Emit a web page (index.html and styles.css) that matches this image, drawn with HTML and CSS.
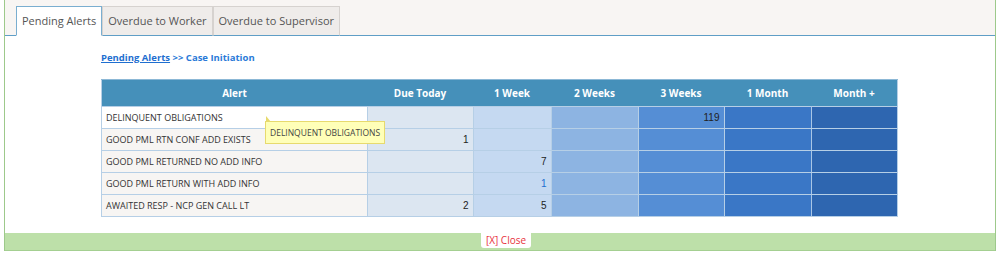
FILE: index.html
```html
<!DOCTYPE html>
<html lang="en">
<head>
    <meta charset="UTF-8">
    <title>Pending Alerts</title>
    <link rel="stylesheet" href="styles.css">
</head>
<body>
    <div class="panel">
        <div class="tabbar">
            <div class="tab active">Pending Alerts</div>
            <div class="tab">Overdue to Worker</div>
            <div class="tab">Overdue to Supervisor</div>
        </div>

        <div class="content">
            <div class="crumb"><a href="#">Pending Alerts</a> &gt;&gt; Case Initiation</div>

            <div class="table-wrap">
                <table class="alerts">
                    <thead>
                        <tr>
                            <th class="c-alert">Alert</th>
                            <th class="c-today">Due Today</th>
                            <th class="c-w1">1 Week</th>
                            <th class="c-w2">2 Weeks</th>
                            <th class="c-w3">3 Weeks</th>
                            <th class="c-m1">1 Month</th>
                            <th class="c-mplus">Month +</th>
                        </tr>
                    </thead>
                    <tbody>
                        <tr class="hover">
                            <td class="name">DELINQUENT OBLIGATIONS</td>
                            <td class="today"></td><td class="w1"></td><td class="w2"></td><td class="w3">119</td><td class="m1"></td><td class="mplus"></td>
                        </tr>
                        <tr>
                            <td class="name">GOOD PML RTN CONF ADD EXISTS</td>
                            <td class="today">1</td><td class="w1"></td><td class="w2"></td><td class="w3"></td><td class="m1"></td><td class="mplus"></td>
                        </tr>
                        <tr>
                            <td class="name">GOOD PML RETURNED NO ADD INFO</td>
                            <td class="today"></td><td class="w1">7</td><td class="w2"></td><td class="w3"></td><td class="m1"></td><td class="mplus"></td>
                        </tr>
                        <tr>
                            <td class="name">GOOD PML RETURN WITH ADD INFO</td>
                            <td class="today"></td><td class="w1 link">1</td><td class="w2"></td><td class="w3"></td><td class="m1"></td><td class="mplus"></td>
                        </tr>
                        <tr>
                            <td class="name">AWAITED RESP - NCP GEN CALL LT</td>
                            <td class="today">2</td><td class="w1">5</td><td class="w2"></td><td class="w3"></td><td class="m1"></td><td class="mplus"></td>
                        </tr>
                    </tbody>
                </table>
                <div class="tooltip">DELINQUENT OBLIGATIONS</div>
            </div>
        </div>

        <div class="footer">
            <span class="close">[X] Close</span>
        </div>
    </div>
</body>
</html>
```

FILE: styles.css
```css
body {
    margin: 0;
    font-family: 'Open Sans', sans-serif;
    background-color: #ffffff;
}
.panel {
    margin: 0 4px;
    border-left: 1px solid #9dc98b;
    border-right: 1px solid #9dc98b;
    background-color: #ffffff;
}
.tabbar {
    display: flex;
    align-items: flex-end;
    height: 35px;
    padding-left: 11px;
    background-color: #f8f5f3;
    border-bottom: 1px solid #5f9ec6;
}
.tab {
    height: 28px;
    line-height: 28px;
    padding: 0 5px;
    margin-bottom: -1px;
    font-size: 11px;
    color: #555;
    background-color: #efecea;
    border: 1px solid #d6d2cf;
    border-bottom-color: #5f9ec6;
}
.tab.active {
    background-color: #ffffff;
    border-color: #7aaed0;
    border-bottom-color: #ffffff;
}
.content {
    padding: 14px 0 0 96px;
    height: 183px;
}
.crumb {
    font-size: 9.5px;
    font-weight: bold;
    color: #2a7ad8;
    height: 15px;
    line-height: 15px;
}
.crumb a {
    color: #1f6fd0;
    text-decoration: underline;
}
.table-wrap {
    position: relative;
    margin-top: 14px;
    width: 797px;
}
.alerts {
    border-collapse: collapse;
    width: 797px;
    table-layout: fixed;
    border: 1px solid #b6cfe6;
}
.alerts th {
    height: 26px;
    padding: 0;
    background-color: #4590ba;
    color: #ffffff;
    font-weight: bold;
    font-size: 10px;
    text-align: center;
    border-top: 1px solid #8cb8d6;
}
.alerts td {
    height: 21px;
    padding: 0 4px;
    border: 1px solid #b6cfe6;
    text-align: right;
    color: #222;
    font-family: 'Liberation Sans', sans-serif;
    font-size: 10px;
}
.c-alert { width: 265px; }
.c-today { width: 106px; }
.c-w1 { width: 78px; }
.c-w2 { width: 87px; }
.c-w3 { width: 86px; }
.c-m1 { width: 87px; }
.alerts td.name {
    text-align: left;
    font-family: 'Open Sans', sans-serif;
    font-size: 9px;
    color: #333;
    background-color: #f7f5f3;
}
.alerts tr.hover td.name { background-color: #ffffff; }
.alerts td.today { background-color: #dce6f1; }
.alerts td.w1 { background-color: #c5d9f1; }
.alerts td.w1.link { color: #1f6fd0; }
.alerts td.w2 { background-color: #8db4e2; }
.alerts td.w3 { background-color: #558ed5; }
.alerts td.m1 { background-color: #3a77c6; border-right-color: #a9c6e6; }
.alerts td.mplus { background-color: #2e66b0; }
.tooltip {
    position: absolute;
    left: 164px;
    top: 42px;
    padding: 0 4px;
    height: 21px;
    line-height: 21px;
    font-size: 8.5px;
    color: #444;
    background-color: #ffffb8;
    border: 1px solid #e7da6e;
}
.tooltip::before {
    content: '';
    position: absolute;
    left: 0;
    top: -6px;
    border-left: 5px solid #e7da6e;
    border-top: 6px solid transparent;
}
.footer {
    height: 17px;
    background-color: #bde0a9;
    border-bottom: 1px solid #a4cf91;
    display: flex;
    justify-content: center;
}
.close {
    background-color: #ffffff;
    color: #e8323c;
    font-size: 10px;
    line-height: 15px;
    height: 15px;
    padding: 0 5px;
    margin-left: 12px;
    border-radius: 0 0 3px 3px;
}
```
